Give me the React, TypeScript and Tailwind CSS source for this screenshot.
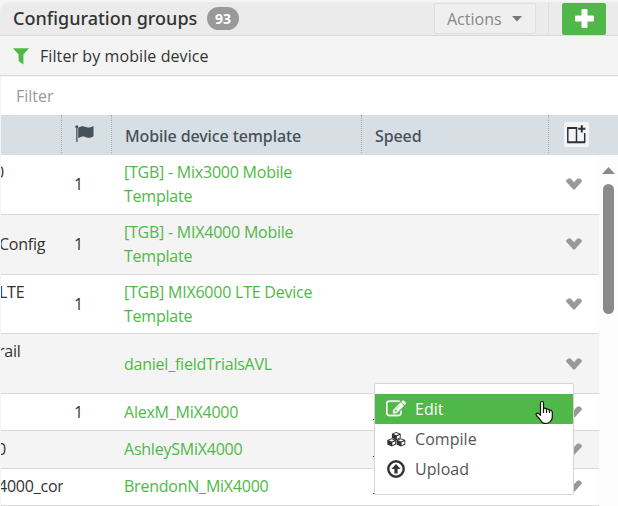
import React from "react";

const GREEN = "#50b848";

function FilterIcon() {
  return (
    <svg width="16" height="17" viewBox="0 0 16 17" fill={GREEN} className="mt-px">
      <path d="M0 0.3h16l-5.600 6.100v10L5.600 13V6.400z" />
    </svg>
  );
}

function FlagIcon() {
  return (
    <svg width="20" height="18" viewBox="0 0 20 18" fill="#44505a">
      <circle cx="1.800" cy="1.800" r="1.500" />
      <path d="M1.200 2h1.300v15H1.200z" />
      <path d="M3.200 2.800C5.600 1.300 7.600.6 10 1.700c2.600 1.200 4.800 1 8.500-.8v10.300c-3 1.700-5.600 2-8 .9-2.200-1-4.600-.4-7.300 1.200z" />
    </svg>
  );
}

function Chevron() {
  return (
    <svg width="16" height="12" viewBox="0 0 16 12" className="shrink-0" fill="#999">
      <path d="M2.300.4 4.600.4 8 4.200 11.400.4h2.300L15.800 2.300v1.500L8.700 11.400H7.300L.2 3.800V2.300z" />
    </svg>
  );
}

function ColumnsIcon() {
  return (
    <svg width="25" height="25" viewBox="0 0 25 25" fill="none" stroke="#2c3047" className="rounded-[2px] bg-[#f4f4f4]">
      <path d="M3.800 5.500v14.500M12.500 5v15M20.700 11v9" strokeWidth="1.500" />
      <path d="M3.200 6h9.800M3.200 20.300h18" strokeWidth="2" stroke="#2b2f36" />
      <path d="M14.200 6.800h7.200M17.800 3.200v7.200" strokeWidth="2" stroke="#2b2f36" />
    </svg>
  );
}

function EditIcon() {
  return (
    <svg width="20" height="20" viewBox="0 0 1792 1792" fill="#fff" stroke="#fff" strokeWidth="30" className="-ml-px">
      <path d="M888 1184l116-116-152-152-116 116v56h96v96h56zm440-720q-16-16-33 1l-350 350q-17 17-1 33t33-1l350-350q17-17 1-33zm80 594v190q0 119-84.500 203.500t-203.500 84.500h-832q-119 0-203.500-84.500t-84.500-203.500v-832q0-119 84.500-203.500t203.500-84.500h832q63 0 117 25 15 7 18 23 3 17-9 29l-49 49q-14 14-32 8-23-6-45-6h-832q-66 0-113 47t-47 113v832q0 66 47 113t113 47h832q66 0 113-47t47-113v-126q0-13 9-22l64-64q15-15 35-7t20 29zm-96-738l288 288-672 672h-288v-288zm444 132l-92 92-288-288 92-92q28-28 68-28t68 28l152 152q28 28 28 68t-28 68z" />
    </svg>
  );
}

function Cube({ x, y }: { x: number; y: number }) {
  return (
    <g transform={`translate(${x} ${y})`}>
      <path d="M4.400 0 8.800 1.700v4.400L4.400 8.300 0 6.100V1.700z" fill="#333" />
      <path d="M4.400.9 7.200 2 4.400 3.200 1.600 2zM5 4.300 7.900 3v2.500L5 7z" fill="#fff" />
    </g>
  );
}

function CubesIcon() {
  return (
    <svg width="19" height="15" viewBox="0 0 19 15">
      <Cube x={4.9} y={0} />
      <Cube x={0.3} y={6.3} />
      <Cube x={9.5} y={6.3} />
    </svg>
  );
}

function UploadIcon() {
  return (
    <svg width="18" height="18" viewBox="0 0 18 18" fill="none" stroke="#333">
      <circle cx="9" cy="9" r="7.700" strokeWidth="2.400" />
      <path d="M9 4 13.600 9h-3v4.400H7.400V9h-3z" fill="#333" stroke="none" />
    </svg>
  );
}

function HandCursor() {
  return (
    <svg width="19" height="25" viewBox="0 0 19 25" fill="#fff" stroke="#111" strokeWidth="1.200" strokeLinejoin="round">
      <path d="M5.500 15V3Q5.500 1.500 7 1.500T8.500 3v5.500q1.800-.8 3 .7 1.800-.6 2.800.9 2.600-.3 3 1.900V17q0 3-2 4.500-1.300 2-4.600 2T6.500 21.500Q4 18 1.500 15.500q-1-1.600.3-2.200 1.300-.5 3.700 2z" />
      <path d="M8.500 8.500V13M11.500 9.500V13M14.500 10.500V13" />
    </svg>
  );
}

type Row = { height: string; name: string; top?: boolean; left: string; count: string; template: string };

const rows: Row[] = [
  { height: "h-[60px] pb-px", name: "0", top: true, left: "-ml-[6px]", count: "1", template: "[TGB] - Mix3000 Mobile Template" },
  { height: "h-[60px] pb-[2px]", name: "Config", left: "-ml-[2px]", count: "1", template: "[TGB] - MIX4000 Mobile Template" },
  { height: "h-[59px]", name: "LTE", top: true, left: "-ml-[2px]", count: "1", template: "[TGB] MIX6000 LTE Device Template" },
  { height: "h-[60px]", name: "rail", top: true, left: "-ml-[3px]", count: "", template: "daniel_fieldTrialsAVL" },
  { height: "h-[37px]", name: "", left: "", count: "1", template: "AlexM_MiX4000" },
  { height: "h-[38px] pb-[2px]", name: "0", left: "-ml-[4px]", count: "", template: "AshleySMiX4000" },
  { height: "h-[37px] pb-[2px]", name: "4000_cor", left: "-ml-[3px]", count: "", template: "BrendonN_MiX4000" },
];

export default function App() {
  return (
    <div className="relative h-[506px] w-[618px] overflow-hidden bg-[#f4f4f4] pt-[2px] font-['Open_Sans','Noto_Sans',sans-serif] text-[16px] text-[#333]">
      <header className="flex h-[34px] items-center rounded-tl-[10px] border-b border-[#d9d9d9] bg-[#ebebeb] pl-[13px]">
        <h1 className="w-[194px] whitespace-nowrap font-['Noto_Sans',sans-serif] text-[18px] font-medium">Configuration groups</h1>
        <span className="flex h-[23px] w-8 items-center justify-center rounded-full bg-[#999] font-['Noto_Sans',sans-serif] text-[14px] font-bold text-white">93</span>
        <button className="ml-[195px] flex h-[31px] w-[102px] items-center rounded-[2px] border border-[#dedede] bg-[#efefef] pl-3 text-[#888]">
          <span className="w-[65px] text-left">Actions</span>
          <svg width="10" height="6" viewBox="0 0 10 6" fill="#777"><path d="M0 0h10L5 5.500z" /></svg>
        </button>
        <div className="ml-3 h-[33px] w-px bg-[#dae0e6]" />
        <button className="ml-[13px] flex h-8 w-11 items-center justify-center rounded-[2px] bg-[#50b848]">
          <svg width="19" height="19" viewBox="0 0 19 19" fill="#fff">
            <rect x="6.500" y="0" width="6" height="19" rx="1.300" />
            <rect x="0" y="6.500" width="19" height="6" rx="1.300" />
          </svg>
        </button>
      </header>
      <div className="flex h-[40px] items-center gap-[11px] border-b border-[#d9d9d9] pl-[13px]">
        <FilterIcon />
        <span className="tracking-[0.09px]">Filter by mobile device</span>
      </div>
      <div className="ml-px mt-px flex h-[38px] items-center bg-white pl-[15px] text-[#999]">Filter</div>
      <div className="ml-px flex h-[40px] bg-[#d7dfe4] font-['Noto_Sans',sans-serif] text-[16px] font-medium tracking-[-0.1px] text-[#44505a]">
        <div className="h-[38px] w-[61px] border-r border-dotted border-[#a3aaad]" />
        <div className="h-[38px] w-[50px] border-r border-dotted border-[#a3aaad] pl-[13px] pt-[10px]"><FlagIcon /></div>
        <div className="flex h-[38px] w-[250px] items-center border-r border-dotted border-[#a3aaad] pl-[13px] pt-1">Mobile device template</div>
        <div className="flex h-[38px] w-[187px] items-center border-r border-dotted border-[#a3aaad] pl-[13px] pt-1">Speed</div>
        <div className="pl-[15px] pt-[7px]"><ColumnsIcon /></div>
      </div>
      <div className="flex">
        <main className="ml-px w-[598px] tracking-[-0.23px]">
          {rows.map((row, i) => (
            <div key={i} className={`flex items-center border-b border-[#d9d9d9] ${row.height} ${i % 2 ? "bg-[#f4f4f4]" : "bg-white"}`}>
              <div className={`flex w-[62px] overflow-hidden whitespace-nowrap ${row.top ? "h-full pt-[5px]" : ""}`}>
                <span className={row.left}>{row.name}</span>
              </div>
              <div className="w-[61px] pl-[11px]">{row.count}</div>
              <div className="w-[236px] pr-8 leading-6 text-[#50b848]">{row.template}</div>
              <div className="w-[206px]">{i > 3 && <span className="ml-[13px]">_</span>}</div>
              <Chevron />
            </div>
          ))}
        </main>
        <aside className="flex w-[19px] flex-col items-center bg-[#fcfcfc] pt-[12px]">
          <svg width="13" height="7" viewBox="0 0 13 7" fill="#8a8a8a"><path d="M6.500 0 13 7H0z" /></svg>
          <div className="mt-[10px] h-[130px] w-[11px] rounded-full bg-[#8a8a8a]" />
        </aside>
      </div>
      <nav className="absolute left-[374px] top-[383px] h-[112px] w-[200px] rounded-[2px] border border-[#d5d5d5] bg-white pt-[10px] tracking-[0.05px] text-[#555]">
        <div className="flex h-[30px] items-center bg-[#50b848] pl-[12px] text-white"><span className="w-7"><EditIcon /></span>Edit</div>
        <div className="flex h-[30px] items-center pl-[12px]"><span className="w-7"><CubesIcon /></span>Compile</div>
        <div className="flex h-[30px] items-center pl-[12px]"><span className="w-7"><UploadIcon /></span>Upload</div>
      </nav>
      <div className="absolute left-[535px] top-[400px]"><HandCursor /></div>
    </div>
  );
}
